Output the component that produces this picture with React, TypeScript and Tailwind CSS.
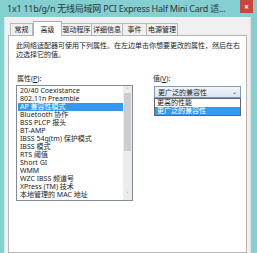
import React from "react";

const font = { fontFamily: '"Noto Sans", "Noto Sans CJK SC", sans-serif' };

const items = [
  "20/40 Coexistance",
  "802.11n Preamble",
  "AP 兼容性模式",
  "Bluetooth 协作",
  "BSS PLCP 报头",
  "BT-AMP",
  "IBSS 54g(tm) 保护模式",
  "IBSS 模式",
  "RTS 阈值",
  "Short GI",
  "WMM",
  "WZC IBSS 频道号",
  "XPress (TM) 技术",
  "本地管理的 MAC 地址",
];

const tabs = ["常规", "高级", "驱动程序", "详细信息", "事件", "电源管理"];
const tabW = [23, 29, 31, 32, 25, 32];

export default function App() {
  return (
    <div
      className="w-[257px] h-[253px] overflow-hidden bg-[#84cfd0] flex flex-col text-[#1c1c1c]"
      style={font}
    >
      {/* title bar */}
      <div className="h-[17px] flex items-start shrink-0">
        <div className="flex-1 min-w-0 pl-[7px] pt-[3px] text-[9px] leading-[12px] tracking-[-0.25px] text-[#2a3a3a] whitespace-nowrap">
          1x1 11b/g/n 无线局域网 PCI Express Half Mini Card 适...
        </div>
        <div className="shrink-0 ml-[6px] mr-[4px] w-[13px] h-[13px] bg-[#c9463d] flex items-center justify-center text-white text-[8px] leading-none font-bold">
          ×
        </div>
      </div>

      {/* window body */}
      <div className="flex-1 ml-[4px] mr-[6px] bg-[#f0f0f0] border-l border-r border-[#d6e6e6] flex flex-col pt-[3px] pl-[3px] pr-[3px]">
        {/* tabs */}
        <div className="flex items-end h-[15px] pl-[2px] relative z-10">
          {tabs.map((t, i) => {
            const sel = i === 1;
            return (
              <div
                key={t}
                style={{ width: tabW[i] }}
                className={
                  sel
                    ? "h-[15px] -mb-[1px] bg-white border border-b-0 border-[#adadad] flex items-center justify-center text-[7px] leading-none"
                    : "h-[12px] bg-[#f0f0f0] border border-b-0 border-[#b9b9b9] -ml-[1px] first:ml-0 flex items-center justify-center text-[7px] leading-none"
                }
              >
                {t}
              </div>
            );
          })}
        </div>

        {/* panel */}
        <div className="flex-1 bg-white border border-[#b5b5b5] pl-[7px] pt-[5px] relative">
          <div className="text-[7px] leading-[9px] whitespace-nowrap">
            此网络适配器可使用下列属性。在左边单击你想要更改的属性，然后在右
          </div>
          <div className="text-[7px] leading-[9px] whitespace-nowrap">边选择它的值。</div>

          <div className="flex mt-[15px]">
            {/* left column */}
            <div className="flex flex-col">
              <div className="text-[7px] leading-[9px] pl-[1px]">
                属性(<span className="underline">P</span>):
              </div>
              <div className="mt-[2px] w-[117px] h-[116px] border border-[#838b93] flex">
                <div className="flex-1 flex flex-col pt-[1px] pl-[1px]">
                  {items.map((it, i) => (
                    <div
                      key={it}
                      className={
                        "h-[8px] text-[7px] leading-[8px] pl-[2px] whitespace-nowrap " +
                        (i === 2 ? "bg-[#3399f3] text-white" : "")
                      }
                    >
                      {it}
                    </div>
                  ))}
                </div>
                <div className="w-[9px] bg-[#ececec] flex flex-col items-center">
                  <div className="h-[7px] text-[6px] leading-[8px] text-[#555]">˄</div>
                  <div className="w-[7px] h-[58px] bg-[#cdcdcd]" />
                  <div className="flex-1" />
                  <div className="h-[9px] text-[6px] leading-[7px] text-[#555]">˅</div>
                </div>
              </div>
            </div>

            {/* right column */}
            <div className="flex flex-col ml-[20px]">
              <div className="text-[7px] leading-[9px]">
                值(<span className="underline">V</span>):
              </div>
              <div className="relative mt-[3px] ml-[1px] w-[87px]">
                <div className="h-[12px] border border-[#7f9db9] bg-gradient-to-b from-[#f2f6fb] to-[#dbe5f1] flex items-center pl-[3px] pr-[3px] text-[7px] leading-none">
                  <span>更广泛的兼容性</span>
                  <span className="ml-auto text-[6px] text-[#333]">⌄</span>
                </div>
                <div className="absolute left-0 top-[12px] w-[87px] border border-[#646464] bg-white">
                  <div className="h-[8px] text-[7px] leading-[8px] pl-[2px]">更高的性能</div>
                  <div className="h-[8px] text-[7px] leading-[8px] pl-[2px] bg-[#3399f3] text-white">
                    更广泛的兼容性
                  </div>
                </div>
              </div>
            </div>
          </div>
        </div>
      </div>
    </div>
  );
}
